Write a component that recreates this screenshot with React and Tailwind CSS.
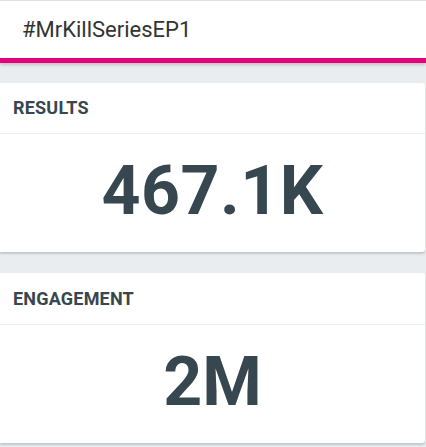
export default function App() {
  return (
    <div
      className="w-[426px] h-[447px] overflow-hidden bg-[#e9edf0]"
      style={{ fontFamily: "Roboto, 'Liberation Sans', sans-serif" }}
    >
      <div className="border-t border-[#dde2e6] bg-white h-[63px] border-b-[5px] border-b-[#e6007e] shadow-[0_2px_3px_rgba(0,0,0,0.18)] flex items-center pl-[22px]">
        <span className="text-[22px] text-[#333333] leading-none">#MrKillSeriesEP1</span>
      </div>

      <div className="mt-[20px] bg-white rounded-r-[3px] shadow-[0_2px_2px_rgba(0,0,0,0.16)] w-[425px]">
        <div className="h-[51px] flex items-center pl-[13px] border-b border-[#eeeeee]">
          <span className="text-[18px] tracking-[0.2px] font-bold text-[#37474f] leading-none">RESULTS</span>
        </div>
        <div className="h-[118px] flex items-center justify-center">
          <span className="text-[68px] tracking-[0.5px] font-bold text-[#37474f] leading-none pb-[4px]">467.1K</span>
        </div>
      </div>

      <div className="mt-[21px] bg-white rounded-r-[3px] shadow-[0_2px_2px_rgba(0,0,0,0.16)] w-[425px]">
        <div className="h-[52px] flex items-center pl-[13px] border-b border-[#eeeeee]">
          <span className="text-[18px] tracking-[0.2px] font-bold text-[#37474f] leading-none">ENGAGEMENT</span>
        </div>
        <div className="h-[118px] flex items-center justify-center">
          <span className="text-[68px] font-bold text-[#37474f] leading-none pb-[4px]">2M</span>
        </div>
      </div>
    </div>
  );
}
